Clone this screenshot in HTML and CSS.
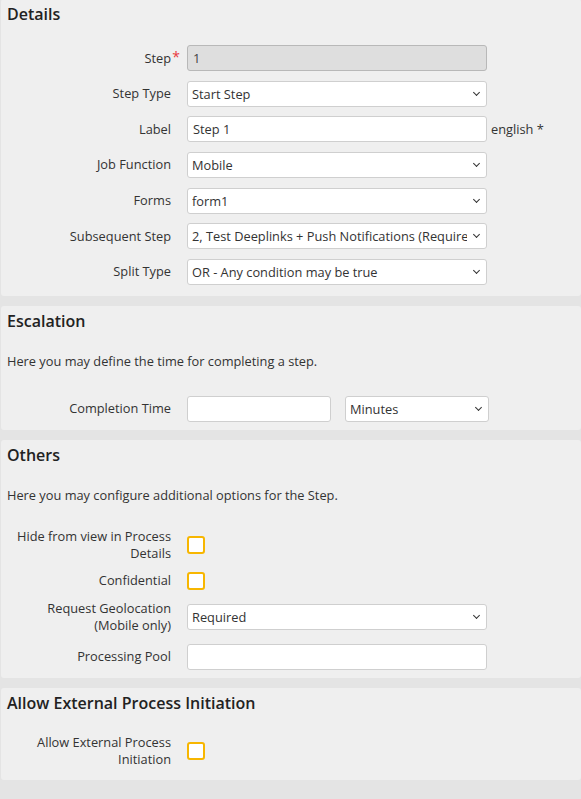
FILE: index.html
```html
<!DOCTYPE html>
<html lang="en">
<head>
<meta charset="utf-8">
<title>Step Details</title>
<link rel="stylesheet" href="styles.css">
</head>
<body>
<div class="page">
  <section class="card card-details">
    <h2 class="card-title">Details</h2>
    <div class="rows rows-details">
      <div class="row">
        <label class="lbl"><span class="req">Step</span></label>
        <div class="ctl"><input class="inp" type="text" value="1" disabled></div>
      </div>
      <div class="row">
        <label class="lbl">Step Type</label>
        <div class="ctl sel-wrap"><select class="sel"><option selected>Start Step</option></select></div>
      </div>
      <div class="row">
        <label class="lbl">Label</label>
        <div class="ctl"><input class="inp" type="text" value="Step 1"></div>
        <span class="lang">english *</span>
      </div>
      <div class="row">
        <label class="lbl">Job Function</label>
        <div class="ctl sel-wrap"><select class="sel"><option selected>Mobile</option></select></div>
      </div>
      <div class="row">
        <label class="lbl">Forms</label>
        <div class="ctl sel-wrap"><select class="sel"><option selected>form1</option></select></div>
      </div>
      <div class="row">
        <label class="lbl">Subsequent Step</label>
        <div class="ctl sel-wrap"><select class="sel"><option selected>2, Test Deeplinks + Push Notifications (Required)</option></select></div>
      </div>
      <div class="row">
        <label class="lbl">Split Type</label>
        <div class="ctl sel-wrap"><select class="sel"><option selected>OR - Any condition may be true</option></select></div>
      </div>
    </div>
  </section>

  <section class="card">
    <h2 class="card-title">Escalation</h2>
    <p class="intro intro-esc">Here you may define the time for completing a step.</p>
    <div class="rows">
      <div class="row row-wide">
        <label class="lbl">Completion Time</label>
        <div class="ctl ctl-pair">
          <input class="inp inp-half" type="text" value="">
          <div class="sel-wrap sel-half"><select class="sel"><option selected>Minutes</option></select></div>
        </div>
      </div>
    </div>
  </section>

  <section class="card">
    <h2 class="card-title">Others</h2>
    <p class="intro">Here you may configure additional options for the Step.</p>
    <div class="rows">
      <div class="row">
        <label class="lbl">Hide from view in Process Details</label>
        <div class="ctl"><input class="chk" type="checkbox"></div>
      </div>
      <div class="row">
        <label class="lbl">Confidential</label>
        <div class="ctl"><input class="chk" type="checkbox"></div>
      </div>
      <div class="row">
        <label class="lbl">Request Geolocation (Mobile only)</label>
        <div class="ctl sel-wrap"><select class="sel"><option selected>Required</option></select></div>
      </div>
      <div class="row">
        <label class="lbl">Processing Pool</label>
        <div class="ctl"><input class="inp" type="text" value=""></div>
      </div>
    </div>
  </section>

  <section class="card card-allow">
    <h2 class="card-title">Allow External Process Initiation</h2>
    <div class="rows">
      <div class="row">
        <label class="lbl">Allow External Process Initiation</label>
        <div class="ctl"><input class="chk" type="checkbox"></div>
      </div>
    </div>
  </section>
</div>
</body>
</html>
```

FILE: styles.css
```css
html, body {
  margin: 0;
  padding: 0;
}

body {
  background: #e4e4e4;
  font-family: "Open Sans", "Liberation Sans", sans-serif;
  font-size: 12.8px;
  color: #333;
  height: 799px;
  overflow: hidden;
}

.page {
  display: flex;
  flex-direction: column;
  gap: 10px;
}

.card {
  background: #efefef;
  margin-left: 1px;
  border-radius: 3px;
  padding: 3px 0 8px 6px;
}

.card-details {
  margin-top: -1px;
  padding-bottom: 11px;
}

.card-allow {
  padding-bottom: 12px;
}

.card-title {
  margin: 0 0 19px;
  font-size: 16px;
  font-weight: 600;
  line-height: 24px;
  color: #222;
}

.intro {
  margin: 0 0 24px;
  line-height: 18px;
}

.intro-esc {
  margin-bottom: 26px;
}

.rows {
  display: flex;
  flex-direction: column;
  gap: 10px;
}

.rows-details {
  gap: 9.67px;
  margin-top: 1px;
}

.row {
  display: grid;
  grid-template-columns: 164px 300px auto;
  column-gap: 16px;
  align-items: center;
}

.row-wide {
  grid-template-columns: 164px auto;
}

.lbl {
  text-align: right;
  line-height: 17px;
}

.req {
  position: relative;
}

.req::after {
  content: "*";
  position: absolute;
  right: -9px;
  top: -1px;
  color: #e8383d;
  font-size: 14px;
}

.ctl {
  display: flex;
  align-items: center;
}

.ctl-pair {
  gap: 14px;
}

.inp,
.sel {
  box-sizing: border-box;
  width: 300px;
  height: 26px;
  margin: 0;
  border: 1px solid #cfcfcf;
  border-radius: 3px;
  background: #fff;
  font-family: "Open Sans", "Liberation Sans", sans-serif;
  font-size: 12.8px;
  color: #333;
  outline: none;
}

.inp {
  padding: 0 5px;
}

.inp:disabled {
  background: #dedede;
  border-color: #b8b8b8;
  color: #444;
  -webkit-text-fill-color: #444;
  opacity: 1;
}

.sel {
  -webkit-appearance: none;
  appearance: none;
  padding: 0 19px 0 4px;
}

.sel-wrap {
  position: relative;
}

.sel-wrap::after {
  content: "";
  position: absolute;
  right: 8px;
  top: 9px;
  width: 4px;
  height: 4px;
  border-right: 1.5px solid #333;
  border-bottom: 1.5px solid #333;
  transform: rotate(45deg);
  pointer-events: none;
}

.inp-half,
.sel-half,
.sel-half .sel {
  width: 144px;
}

.lang {
  margin-left: -12px;
  color: #333;
}

.chk {
  -webkit-appearance: none;
  appearance: none;
  box-sizing: border-box;
  width: 18px;
  height: 18px;
  margin: 0;
  border: 2px solid #f7b600;
  border-radius: 3px;
  background: #fff;
}
```
